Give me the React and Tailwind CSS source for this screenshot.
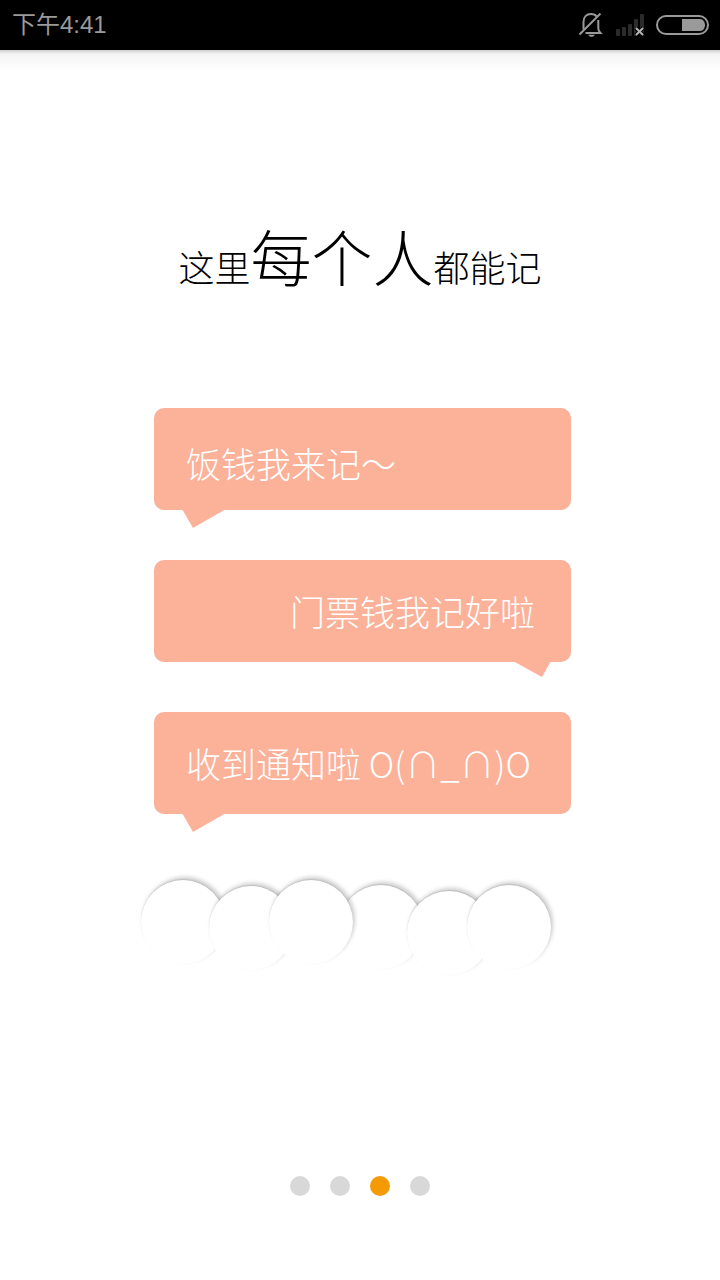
import React, { useState } from 'react';

// Chat bubbles of the slide, tail side decides the text side
const messages = [
  { id: 1, text: '饭钱我来记～', side: 'left', padding: 'pt-2' },
  { id: 2, text: '门票钱我记好啦', side: 'right', padding: 'pt-0' },
  { id: 3, text: '收到通知啦 O(∩_∩)O', side: 'left', padding: 'pt-0' },
];

function MutedBell() {
  return (
    <svg width="26" height="26" viewBox="0 0 26 26" fill="none" stroke="#9a9a9a" strokeWidth="2">
      <path d="M5.5 17.5V10C5.5 5 8.5 2 13 2C15.5 2 17.5 2.9 18.8 4.5" />
      <path d="M20.3 8V16.5C20.3 18.5 21 19.5 22.5 21H7.5" />
      <path d="M1.5 22.5L22.5 1.5" />
      <path d="M10 22.8H17L15 24.8H12Z" fill="#9a9a9a" stroke="none" />
    </svg>
  );
}

function NoSignal() {
  return (
    <svg width="30" height="26" viewBox="0 0 30 26">
      <g fill="#2b2b2b">
        <rect x="1" y="17" width="4" height="7" rx="1" />
        <rect x="7" y="15" width="4" height="9" rx="1" />
        <rect x="13" y="12" width="4" height="12" rx="1" />
        <rect x="19" y="7" width="4" height="17" rx="1" />
        <rect x="25" y="2" width="4" height="22" rx="1" />
      </g>
      <path d="M21 16L28 23M28 16L21 23" stroke="#000" strokeWidth="4" />
      <path d="M21 16L28 23M28 16L21 23" stroke="#b5b5b5" strokeWidth="2" />
    </svg>
  );
}

function Battery() {
  return (
    <svg width="54" height="20" viewBox="0 0 54 20">
      <rect x="1" y="1" width="51" height="18" rx="9" fill="none" stroke="#9a9a9a" strokeWidth="2" />
      <path d="M26 4H44C47 4 49 7 49 10C49 13 47 16 44 16H26Z" fill="#9a9a9a" />
    </svg>
  );
}

function StatusBar() {
  return (
    <header className="flex h-[50px] items-center justify-between bg-black pr-[10px] pl-3">
      <span className="font-['Liberation_Sans','Noto_Sans_CJK_SC',sans-serif] text-[24px] leading-8 font-normal text-[#9a9a9a]">
        下午4:41
      </span>
      <div className="flex items-center gap-[11px]">
        <MutedBell />
        <NoSignal />
        <Battery />
      </div>
    </header>
  );
}

function Bubble({ text, side, padding }) {
  const isLeft = side === 'left';

  return (
    <li
      className={`relative flex h-[102px] items-center rounded-[10px] bg-[#fcb199] ${padding} ${
        isLeft ? 'justify-start pl-8' : 'justify-end pr-9'
      }`}
    >
      <p className="text-[35px] leading-[48px] whitespace-nowrap text-white">{text}</p>
      {/* Tail */}
      <svg
        className={`absolute top-full -mt-px ${isLeft ? 'left-7' : 'right-5'}`}
        width={isLeft ? 44 : 38}
        height={isLeft ? 19 : 16}
        viewBox={isLeft ? '0 0 44 19' : '0 0 38 16'}
        fill="#fcb199"
      >
        {isLeft ? <path d="M0 0H44L11 19Z" /> : <path d="M0 0H38L29 16Z" />}
      </svg>
    </li>
  );
}

// Three overlapping paper discs
function Discs() {
  const disc = 'size-[84px] rounded-full bg-white shadow-[2px_-3px_4px_rgba(0,0,0,0.2),0_-1px_1px_rgba(0,0,0,0.1)]';

  return (
    <div className="flex items-start">
      <span className={`${disc}`} />
      <span className={`${disc} relative -ml-4 mt-[6px]`} />
      <span className={`${disc} relative z-10 -ml-6`} />
    </div>
  );
}

export default function App() {
  const [page, setPage] = useState(2); // Current slide index

  return (
    <div className="flex min-h-screen flex-col bg-white font-['Noto_Sans_CJK_SC',sans-serif] font-light">
      <StatusBar />
      <div className="h-5 bg-linear-to-b from-[#cfcfcf] via-[#f4f4f4] via-20% to-white" />

      <main className="flex flex-1 flex-col items-center">
        <h1 className="mt-[142px] flex items-baseline text-[36px] leading-[88px] whitespace-nowrap text-black">
          这里<span className="text-[61px]">每个人</span>都能记
        </h1>

        <div className="mt-[98px] w-full pl-[5px]">
          <ul className="mx-auto flex w-[417px] max-w-full flex-col gap-[50px]">
            {messages.map((message) => (
              <Bubble key={message.id} text={message.text} side={message.side} padding={message.padding} />
            ))}
          </ul>
        </div>

        <div className="mt-[66px] flex items-start pr-7">
          <Discs />
          <div className="-ml-[14px] mt-[5px]">
            <Discs />
          </div>
        </div>

        {/* Slide indicator */}
        <nav className="mt-auto flex gap-5 pb-[84px]">
          {[0, 1, 2, 3].map((index) => (
            <button
              key={index}
              type="button"
              aria-label={`第${index + 1}页`}
              onClick={() => setPage(index)}
              className={`size-5 rounded-full ${index === page ? 'bg-[#f39a05]' : 'bg-[#d9d8d9]'}`}
            />
          ))}
        </nav>
      </main>
    </div>
  );
}
